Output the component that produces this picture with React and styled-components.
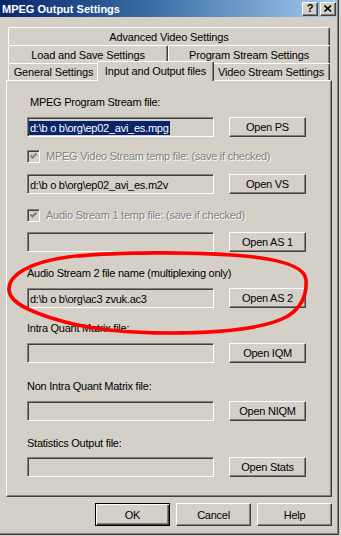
import React from "react";
import styled, { createGlobalStyle } from "styled-components";

const GlobalStyle = createGlobalStyle`
  html, body {
    margin: 0;
    padding: 0;
    background: #d4d0c8;
  }
  body {
    font-family: "Liberation Sans", Arial, sans-serif;
    font-size: 11px;
    letter-spacing: -0.25px;
    color: #000;
  }
`;

const Window = styled.div`
  position: relative;
  width: 339px;
  height: 535px;
  box-sizing: border-box;
  background: #d4d0c8;
  border-right: 1px solid #404040;
  border-bottom: 1px solid #404040;
  box-shadow: inset -1px -1px #808080;
  display: flex;
  flex-direction: column;
`;

const TitleBar = styled.div`
  width: 337px;
  height: 17px;
  box-sizing: border-box;
  padding: 0 1px 0 2px;
  display: flex;
  align-items: center;
  background: linear-gradient(to right, #0a246a, #3a6ea5 45%, #a6caf0);
`;

const Title = styled.div`
  flex: 1;
  color: #fff;
  font-weight: bold;
  font-size: 11px;
  letter-spacing: 0;
  white-space: nowrap;
`;

const CaptionButtons = styled.div`
  display: flex;
  gap: 2px;
`;

const CaptionButton = styled.div`
  width: 16px;
  height: 14px;
  box-sizing: border-box;
  border: 1px solid;
  border-color: #fff #404040 #404040 #fff;
  box-shadow: inset -1px -1px #808080;
  background: #d4d0c8;
  display: flex;
  align-items: center;
  justify-content: center;
  font-weight: bold;
  font-size: 11px;
  line-height: 1;
`;

const TabStrip = styled.div`
  margin: 10px 0 0 8px;
  width: 322px;
  display: flex;
  flex-direction: column;
`;

const TabRow = styled.div`
  display: flex;
  align-items: flex-end;
  height: ${(p) => p.$h}px;
`;

const Tab = styled.div`
  flex: none;
  width: ${(p) => p.$w}px;
  height: ${(p) => (p.$active ? 20 : p.$h || 18)}px;
  box-sizing: border-box;
  border: 1px solid;
  border-bottom: none;
  border-color: #fff #404040 transparent #fff;
  box-shadow: inset -1px 0 #808080;
  border-radius: 2px 2px 0 0;
  background: #d4d0c8;
  display: flex;
  align-items: center;
  justify-content: center;
  white-space: nowrap;
  letter-spacing: -0.15px;
  padding-bottom: ${(p) => (p.$active ? 2 : 0)}px;
  ${(p) =>
    p.$active &&
    `
    position: relative;
    z-index: 1;
    margin: -2px -2px -1px;
  `}
`;

const Panel = styled.div`
  margin-left: 6px;
  width: 326px;
  height: 417px;
  box-sizing: border-box;
  border: 1px solid;
  border-color: #fff #404040 #404040 #fff;
  box-shadow: inset -1px -1px #808080;
  padding: 0 0 0 20px;
  display: flex;
  flex-direction: column;
`;

const Group = styled.div`
  margin-top: ${(p) => p.$mt}px;
  display: flex;
  flex-direction: column;
  gap: ${(p) => p.$gap}px;
`;

const Label = styled.div`
  height: 14px;
  line-height: 14px;
  white-space: nowrap;
  padding-left: ${(p) => p.$indent || 0}px;
`;

const CheckRow = styled.div`
  height: 14px;
  display: flex;
  align-items: center;
  gap: 6px;
`;

const CheckBox = styled.div`
  width: 13px;
  height: 13px;
  box-sizing: border-box;
  border: 1px solid;
  border-color: #808080 #fff #fff #808080;
  box-shadow: inset 1px 1px #404040, inset -1px -1px #d4d0c8;
  background: #d4d0c8;
  display: flex;
  align-items: center;
  justify-content: center;
`;

const DisabledText = styled.span`
  color: #808080;
  text-shadow: 1px 1px 0 #fff;
  white-space: nowrap;
  line-height: 14px;
`;

const FieldRow = styled.div`
  display: flex;
  align-items: center;
  gap: 15px;
`;

const Field = styled.div`
  width: 187px;
  height: 20px;
  box-sizing: border-box;
  border: 1px solid;
  border-color: #808080 #fff #fff #808080;
  box-shadow: inset 1px 1px #404040, inset -1px -1px #d4d0c8;
  background: #d4d0c8;
  padding: 1px 0 0 2px;
  display: flex;
  align-items: center;
  white-space: nowrap;
  overflow: hidden;
  line-height: 14px;
`;

const Selected = styled.span`
  background: #0a246a;
  color: #fff;
  margin-left: -1px;
  padding: 0 1px;
`;

const Button = styled.div`
  flex: none;
  width: ${(p) => p.$w || 77}px;
  height: ${(p) => p.$h || 20}px;
  box-sizing: border-box;
  border: 1px solid;
  border-color: ${(p) =>
    p.$default ? "#000" : "#fff #404040 #404040 #fff"};
  box-shadow: ${(p) =>
    p.$default
      ? "inset 1px 1px #fff, inset -1px -1px #404040, inset -2px -2px #808080"
      : "inset -1px -1px #808080"};
  background: #d4d0c8;
  display: flex;
  align-items: center;
  justify-content: center;
  white-space: nowrap;
`;

const ButtonBar = styled.div`
  margin: 6px 0 0 6px;
  width: 326px;
  display: flex;
  justify-content: flex-end;
  gap: 6px;
`;

const Scribble = styled.svg`
  position: absolute;
  left: 0;
  top: 0;
  pointer-events: none;
`;

const Check = () => (
  <svg width="9" height="9" viewBox="0 0 9 9">
    <path d="M1.5 3.5 L3.5 5.5 L7.5 1.5" fill="none" stroke="#808080" strokeWidth="2" />
  </svg>
);

const FileRow = ({ value, button, selected }) => (
  <FieldRow>
    <Field>{selected ? <Selected>{value}</Selected> : value}</Field>
    <Button>{button}</Button>
  </FieldRow>
);

export default function App() {
  return (
    <>
      <GlobalStyle />
      <Window>
        <TitleBar>
          <Title>MPEG Output Settings</Title>
          <CaptionButtons>
            <CaptionButton>?</CaptionButton>
            <CaptionButton>
              <svg width="8" height="7" viewBox="0 0 8 7">
                <path d="M0.5 0.5 L7 6.5 M7 0.5 L0.5 6.5" stroke="#000" strokeWidth="1.6" />
              </svg>
            </CaptionButton>
          </CaptionButtons>
        </TitleBar>

        <TabStrip>
          <TabRow $h={18}>
            <Tab $w={322}>Advanced Video Settings</Tab>
          </TabRow>
          <TabRow $h={18}>
            <Tab $w={160}>Load and Save Settings</Tab>
            <Tab $w={162}>Program Stream Settings</Tab>
          </TabRow>
          <TabRow $h={17}>
            <Tab $w={91} $h={17}>General Settings</Tab>
            <Tab $w={117} $active>Input and Output files</Tab>
            <Tab $w={118} $h={17}>Video Stream Settings</Tab>
          </TabRow>
        </TabStrip>

        <Panel>
          <Group $mt={14} $gap={8}>
            <Label $indent={3}>MPEG Program Stream file:</Label>
            <FileRow value="d:\b o b\org\ep02_avi_es.mpg" button="Open PS" selected />
          </Group>
          <Group $mt={12} $gap={11}>
            <CheckRow>
              <CheckBox><Check /></CheckBox>
              <DisabledText>MPEG Video Stream temp file: (save if checked)</DisabledText>
            </CheckRow>
            <FileRow value="d:\b o b\org\ep02_avi_es.m2v" button="Open VS" />
          </Group>
          <Group $mt={14} $gap={10}>
            <CheckRow>
              <CheckBox><Check /></CheckBox>
              <DisabledText>Audio Stream 1 temp file: (save if checked)</DisabledText>
            </CheckRow>
            <FileRow value="" button="Open AS 1" />
          </Group>
          <Group $mt={14} $gap={8}>
            <Label>Audio Stream 2 file name (multiplexing only)</Label>
            <FileRow value="d:\b o b\org\ac3 zvuk.ac3" button="Open AS 2" />
          </Group>
          <Group $mt={13} $gap={8}>
            <Label>Intra Quant Matrix file:</Label>
            <FileRow value="" button="Open IQM" />
          </Group>
          <Group $mt={16} $gap={8}>
            <Label>Non Intra Quant Matrix file:</Label>
            <FileRow value="" button="Open NIQM" />
          </Group>
          <Group $mt={15} $gap={7}>
            <Label>Statistics Output file:</Label>
            <FileRow value="" button="Open Stats" />
          </Group>
        </Panel>

        <ButtonBar>
          <Button $w={75} $h={23} $default>OK</Button>
          <Button $w={75} $h={23}>Cancel</Button>
          <Button $w={75} $h={23}>Help</Button>
        </ButtonBar>

        <Scribble width="341" height="536" viewBox="0 0 341 536">
          <path
            d="M78 256 C120 252, 190 252, 232 255 C275 258, 305 265, 306 280 C307 295, 302 307, 288 316 C265 329, 220 333, 170 333 C130 333, 95 330, 65 322 C35 314, 10 304, 9 290 C8 275, 30 262, 68 257 C75 256, 82 255, 92 255"
            fill="none"
            stroke="#ff0000"
            strokeWidth="3.6"
            strokeLinecap="round"
            strokeLinejoin="round"
          />
        </Scribble>
      </Window>
    </>
  );
}
